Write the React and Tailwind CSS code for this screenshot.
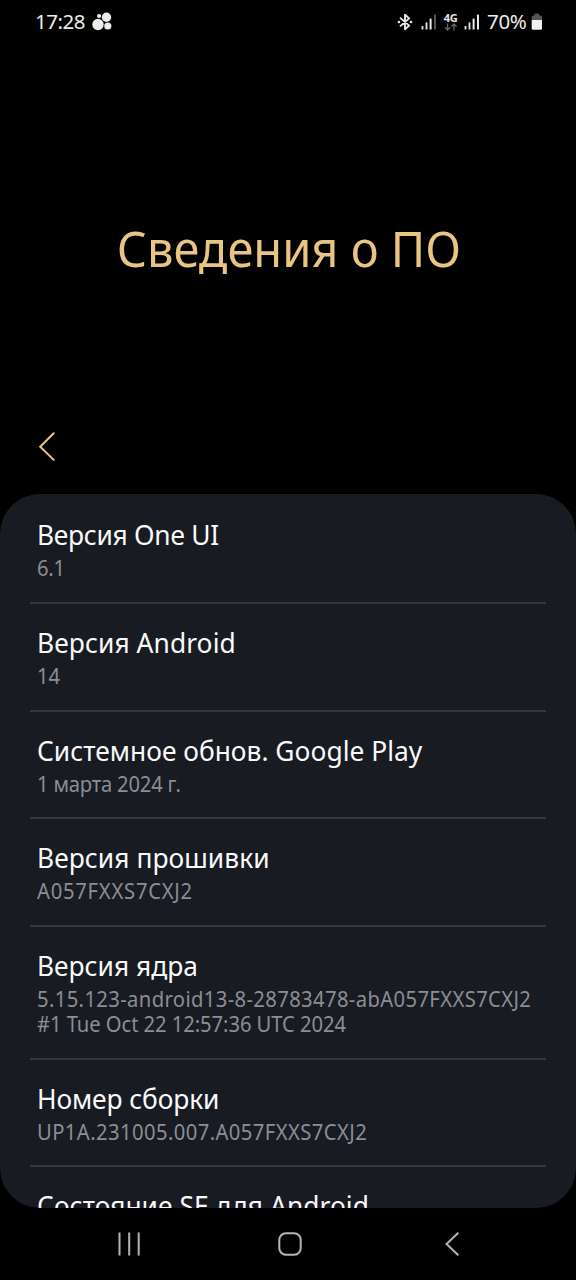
const items = [
  { title: "Версия One UI", lines: ["6.1"], tracking: "tracking-[-0.3px]", subTracking: ["tracking-[-0.2px]"] },
  { title: "Версия Android", lines: ["14"], tracking: "tracking-[0.1px]", subTracking: ["tracking-normal"] },
  {
    title: "Системное обнов. Google Play",
    lines: ["1 марта 2024 г."],
    tracking: "tracking-[0.03px]",
    subTracking: ["tracking-[-0.2px]"],
  },
  {
    title: "Версия прошивки",
    lines: ["A057FXXS7CXJ2"],
    tracking: "tracking-[0.07px]",
    subTracking: ["tracking-[0.8px]"],
  },
  {
    title: "Версия ядра",
    lines: ["5.15.123-android13-8-28783478-abA057FXXS7CXJ2", "#1 Tue Oct 22 12:57:36 UTC 2024"],
    tracking: "tracking-normal",
    subTracking: ["tracking-[0.4px]", "tracking-[-0.07px]"],
  },
  {
    title: "Номер сборки",
    lines: ["UP1A.231005.007.A057FXXS7CXJ2"],
    tracking: "tracking-[-0.1px]",
    subTracking: ["tracking-[0.45px]"],
  },
  { title: "Состояние SE для Android", lines: [], tracking: "tracking-[0.07px]", subTracking: [] },
];

const BubblesIcon = () => (
  <svg width="20" height="20" viewBox="0 0 20 20" fill="#ececec">
    <circle cx="6" cy="12.5" r="5.7" />
    <circle cx="14.5" cy="5.2" r="4.7" />
    <circle cx="7.1" cy="4" r="2.1" />
    <circle cx="15.8" cy="14" r="3.6" />
  </svg>
);

const BluetoothIcon = () => (
  <svg width="16" height="18" viewBox="0 0 16 18" fill="none" stroke="#e8e8e8" strokeWidth="1.9">
    <path d="M3 4.6 12.2 12.6 8 16.2V1.8L12.2 5.4 3 13.4" strokeLinejoin="round" />
    <circle cx="1.9" cy="9" r="1.3" fill="#e8e8e8" stroke="none" />
    <circle cx="14" cy="9" r="1.3" fill="#e8e8e8" stroke="none" />
  </svg>
);

const SignalIcon = ({ last }) => (
  <svg width="16" height="16" viewBox="0 0 16 16" fill="#e8e8e8">
    <rect x="0.6" y="12" width="1.8" height="3.5" />
    <rect x="4.6" y="8.4" width="1.8" height="7.1" />
    <rect x="8.6" y="4.6" width="2" height="10.9" />
    <rect x="13" y="0.6" width="2" height="14.9" fill={last} />
  </svg>
);

const NetworkIcon = () => (
  <div className="flex w-[15px] flex-col items-center">
    <span className="text-[11px] leading-[10px] font-bold tracking-[-0.3px] text-[#e8e8e8]">4G</span>
    <svg width="14" height="8" viewBox="0 0 14 8" fill="none" stroke="#666" strokeWidth="1.3">
      <path d="M3.6 0.5V7M1 4.4 3.6 7 6.2 4.4M10 7.5V1M7.4 3.6 10 1l2.6 2.6" />
    </svg>
  </div>
);

const BatteryIcon = () => (
  <svg width="12" height="18" viewBox="0 0 12 18">
    <path d="M3.5 1.4Q3.5 0.6 4.3 0.6h3Q8.2 0.6 8.2 1.4V2.5H9.4Q11 2.5 11 4.1V7H0.7V4.1Q0.7 2.5 2.3 2.5H3.5Z" fill="#555" />
    <path d="M0.7 6.9H11V15.2Q11 16.8 9.4 16.8H2.3Q0.7 16.8 0.7 15.2Z" fill="#f0f0f0" />
  </svg>
);

const StatusBar = () => (
  <header className="flex h-[43px] items-center pl-[35px] text-[#ececec]">
    <span className="w-[57px] text-[20.5px] leading-[41px] tracking-[-0.5px]">17:28</span>
    <BubblesIcon />
    <div className="ml-auto flex items-center pr-[33px]">
      <BluetoothIcon />
      <div className="ml-2 flex">
        <SignalIcon last="#555" />
      </div>
      <div className="ml-[6px]">
        <NetworkIcon />
      </div>
      <div className="ml-[6px] flex">
        <SignalIcon last="#e8e8e8" />
      </div>
      <span className="ml-[7px] w-[44px] text-[20.5px] leading-[41px] tracking-[-0.3px] whitespace-nowrap">70%</span>
      <BatteryIcon />
    </div>
  </header>
);

const InfoRow = ({ item }) => (
  <li className="h-fit shrink-0 border-b-2 border-[#36383e] px-[7px] pt-[19px] pb-[21.7px] whitespace-nowrap">
    <p className={`origin-left scale-x-94 text-[28px] leading-[38px] text-[#fafafa] ${item.tracking}`}>{item.title}</p>
    <div className="mt-[2px] origin-left scale-x-94 text-[21.5px] leading-[25px] text-[#8b8e94]">
      {item.lines.map((line, i) => (
        <p key={line} className={item.subTracking[i]}>
          {line}
        </p>
      ))}
    </div>
  </li>
);

const NavBar = () => (
  <nav className="flex h-[72px] items-center pl-[118px]">
    <svg width="23" height="24" viewBox="0 0 23 24" stroke="#b5b5b5" strokeWidth="2">
      <path d="M1.5 0.5v23M11.2 0.5v23M20.7 0.5v23" />
    </svg>
    <svg className="ml-[137px]" width="24" height="24" viewBox="0 0 24 24" fill="none" stroke="#b5b5b5" strokeWidth="2">
      <rect x="1.3" y="1.3" width="21.4" height="21.4" rx="6.5" />
    </svg>
    <svg className="ml-[143px]" width="15" height="24" viewBox="0 0 15 24" fill="none" stroke="#b5b5b5" strokeWidth="2">
      <path d="M13.3 0.7 1.5 12l11.8 11.3" />
    </svg>
  </nav>
);

export default function App() {
  return (
    <div className="flex h-[1280px] w-[576px] flex-col overflow-hidden bg-black font-['Noto_Sans','Open_Sans',sans-serif]">
      <StatusBar />
      <div className="flex h-[451px] shrink-0 flex-col">
        <h1 className="mt-[170px] scale-x-94 pl-[2px] text-center text-[50px] leading-[70px] whitespace-nowrap text-[#e9c583]">
          Сведения о ПО
        </h1>
        <button className="mt-[149px] ml-[38px] block w-[18px]">
          <svg width="18" height="30" viewBox="0 0 18 30" fill="none" stroke="#e9c583" strokeWidth="2">
            <path d="M15.7 1.3 2.2 14.7l13.5 13.2" strokeLinecap="round" />
          </svg>
        </button>
      </div>
      <main className="h-[714px] shrink-0 overflow-hidden rounded-[40px] bg-[#181b22] px-[30px] pt-[2.3px]">
        <ul className="flex flex-col">
          {items.map((item) => (
            <InfoRow key={item.title} item={item} />
          ))}
        </ul>
      </main>
      <NavBar />
    </div>
  );
}
